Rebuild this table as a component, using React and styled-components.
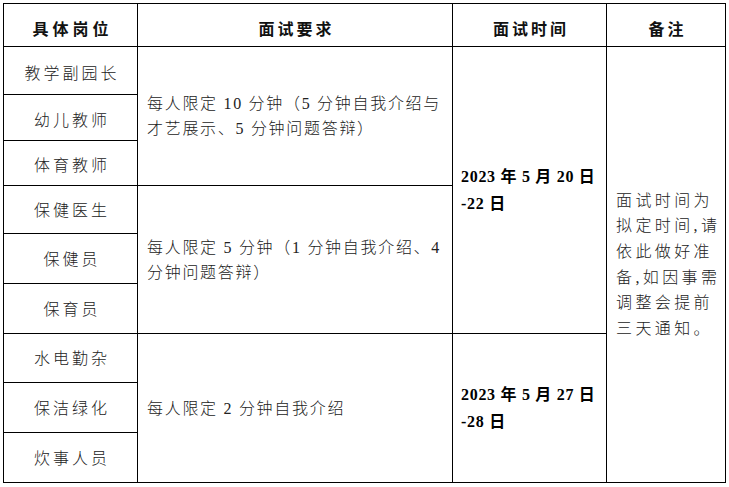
import React from "react";
import styled, { createGlobalStyle } from "styled-components";

const GlobalStyle = createGlobalStyle`
  html, body {
    margin: 0;
    padding: 0;
    background: #fff;
  }
  body {
    font-family: "Liberation Serif", "Noto Sans CJK SC", serif;
    color: #222;
  }
`;

const Page = styled.div`
  padding: 3px 0 0 3px;
`;

const Table = styled.table`
  border-collapse: collapse;
  table-layout: fixed;
  width: 722px;
  font-size: 16px;
`;

const Col = styled.col`
  width: ${({ $w }) => $w}px;
`;

const Row = styled.tr`
  height: ${({ $h }) => $h}px;
`;

const HeadCell = styled.th`
  border: 1px solid #000;
  padding: 10px 0 0 ${({ $spacing }) => $spacing}px;
  font-weight: 700;
  letter-spacing: ${({ $spacing }) => $spacing}px;
  text-align: center;
  vertical-align: middle;
  color: #111;
  line-height: 20px;
`;

const PostCell = styled.td`
  border: 1px solid #000;
  padding: ${({ $top }) => $top}px 0 0 3px;
  text-align: center;
  vertical-align: middle;
  letter-spacing: 3px;
  font-weight: 300;
  line-height: 20px;
`;

const ReqCell = styled.td`
  border: 1px solid #000;
  padding: 0 4px 0 9px;
  text-align: left;
  vertical-align: middle;
  letter-spacing: 1.7px;
  font-weight: 300;
  line-height: 25px;
`;

const DateCell = styled.td`
  border: 1px solid #000;
  padding: 0 4px 0 8px;
  text-align: left;
  vertical-align: middle;
  font-weight: 700;
  letter-spacing: 0.7px;
  color: #000;
  line-height: 27px;
`;

const NoteCell = styled.td`
  border: 1px solid #000;
  padding: 0 4px 0 9px;
  text-align: left;
  vertical-align: middle;
  letter-spacing: 3.4px;
  font-weight: 300;
  line-height: 25.6px;
`;

const Lines = ({ lines }) =>
  lines.map((l, i) => (
    <React.Fragment key={i}>
      {i > 0 && <br />}
      {l}
    </React.Fragment>
  ));

const rows = [
  {
    post: "教学副园长",
    h: 48,
    top: 6,
    req: { span: 3, lines: ["每人限定 10 分钟（5 分钟自我介绍与", "才艺展示、5 分钟问题答辩）"] },
    date: { span: 6, lines: ["2023 年 5 月 20 日", "-22 日"] },
    note: true,
  },
  { post: "幼儿教师", h: 46, top: 6 },
  { post: "体育教师", h: 45, top: 6 },
  {
    post: "保健医生",
    h: 48,
    top: 3,
    req: { span: 3, lines: ["每人限定 5 分钟（1 分钟自我介绍、4", "分钟问题答辩）"] },
  },
  { post: "保健员", h: 50, top: 3 },
  { post: "保育员", h: 50, top: 3 },
  {
    post: "水电勤杂",
    h: 49,
    top: 2,
    req: { span: 3, lines: ["每人限定 2 分钟自我介绍"] },
    date: { span: 3, lines: ["2023 年 5 月 27 日", "-28 日"] },
  },
  { post: "保洁绿化", h: 50, top: 2 },
  { post: "炊事人员", h: 50, top: 2 },
];

const noteLines = [
  "面试时间为",
  "拟定时间,请",
  "依此做好准",
  "备,如因事需",
  "调整会提前",
  "三天通知。",
];

export default function App() {
  return (
    <>
      <GlobalStyle />
      <Page>
        <Table>
          <colgroup>
            <Col $w={134} />
            <Col $w={315} />
            <Col $w={154} />
            <Col $w={119} />
          </colgroup>
          <thead>
            <Row $h={43}>
              <HeadCell $spacing={4}>具体岗位</HeadCell>
              <HeadCell $spacing={3}>面试要求</HeadCell>
              <HeadCell $spacing={3}>面试时间</HeadCell>
              <HeadCell $spacing={3}>备注</HeadCell>
            </Row>
          </thead>
          <tbody>
            {rows.map((r) => (
              <Row key={r.post} $h={r.h}>
                <PostCell $top={r.top}>{r.post}</PostCell>
                {r.req && (
                  <ReqCell rowSpan={r.req.span}>
                    <Lines lines={r.req.lines} />
                  </ReqCell>
                )}
                {r.date && (
                  <DateCell rowSpan={r.date.span}>
                    <Lines lines={r.date.lines} />
                  </DateCell>
                )}
                {r.note && (
                  <NoteCell rowSpan={9}>
                    <Lines lines={noteLines} />
                  </NoteCell>
                )}
              </Row>
            ))}
          </tbody>
        </Table>
      </Page>
    </>
  );
}
